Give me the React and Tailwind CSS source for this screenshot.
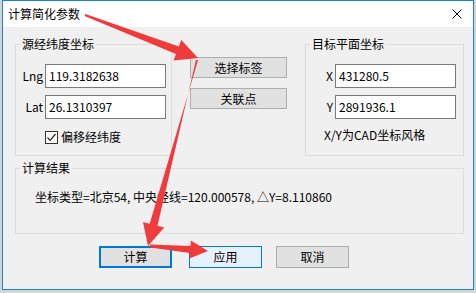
const font = { fontFamily: '"Noto Sans CJK SC", "Noto Sans", sans-serif' };

function Field({ label, value }) {
  return (
    <div className="flex items-center">
      <span className="w-[27px] text-right leading-[16px]">{label}</span>
      <div className="ml-[2px] w-[121px] h-[24px] bg-white border border-[#7a7a7a] pl-[3px] flex items-center leading-[16px]">
        {value}
      </div>
    </div>
  );
}

function Group({ title, className, children }) {
  return (
    <fieldset className={`border border-[#dcdcdc] ${className}`}>
      <legend className="ml-[4px] px-[2px] leading-[16px]">{title}</legend>
      {children}
    </fieldset>
  );
}

function Arrows() {
  return (
    <svg className="absolute left-0 top-0 pointer-events-none" width="476" height="293" viewBox="0 0 476 293">
      <g fill="#ef3b3b">
        <polygon points="85.4,14.1 178.8,46.5 181.3,39.9 198,58 173.5,60.5 176,53.9 84.6,15.9" />
        <polygon points="196,59.7 157.5,225.7 164.2,227.5 148,246 143,221.9 149.7,223.7 198,60.3" />
        <polygon points="150.1,244.5 190.4,246 190.9,240.5 208,251 189.3,258.5 189.8,253 149.9,247.5" />
      </g>
    </svg>
  );
}

export default function App() {
  return (
    <div className="relative w-[476px] h-[293px] bg-[#d4d4d4] text-[12px] text-black" style={font}>
      <div className="ml-[2px] w-[472px] h-[290px] border border-[#1883d7] bg-[#f0f0f0] flex flex-col">
        {/* 标题栏 */}
        <div className="h-[26px] bg-white flex items-center justify-between pl-[5px] pr-[11px]">
          <span className="leading-[16px]">计算简化参数</span>
          <svg width="10" height="10" viewBox="0 0 10 10" stroke="#000" strokeWidth="1">
            <path d="M0.5 0.5L9.5 9.5M9.5 0.5L0.5 9.5" />
          </svg>
        </div>

        <div className="flex-1 pl-[12px]">
          <div className="flex mt-[9px]">
            <Group title="源经纬度坐标" className="w-[157px] h-[120px]">
              <div className="mt-[12px]">
                <Field label="Lng" value="119.3182638" />
              </div>
              <div className="mt-[7px]">
                <Field label="Lat" value="26.1310397" />
              </div>
              <div className="mt-[10px] pl-[29px] flex items-center">
                <div className="w-[13px] h-[13px] border border-[#333] bg-white flex items-center justify-center">
                  <svg width="11" height="11" viewBox="0 0 11 11" fill="none" stroke="#222" strokeWidth="1.2">
                    <path d="M1.5 5.5L4.2 8.3L9.5 2" />
                  </svg>
                </div>
                <span className="ml-[3px] leading-[16px]">偏移经纬度</span>
              </div>
            </Group>

            <div className="ml-[18px] mt-[21px] flex flex-col">
              <button className="w-[97px] h-[21px] bg-[#e1e1e1] border border-[#adadad] leading-[16px]">选择标签</button>
              <button className="mt-[10px] w-[97px] h-[21px] bg-[#e1e1e1] border border-[#adadad] leading-[16px]">关联点</button>
            </div>

            <Group title="目标平面坐标" className="ml-[18px] w-[159px] h-[120px]">
              <div className="mt-[12px]">
                <Field label="X" value="431280.5" />
              </div>
              <div className="mt-[7px]">
                <Field label="Y" value="2891936.1" />
              </div>
              <div className="mt-[8px] pl-[18px] leading-[16px]">X/Y为CAD坐标风格</div>
            </Group>
          </div>

          <Group title="计算结果" className="mt-[4px] w-[449px] h-[74px]">
            <div className="mt-[13px] pl-[19px] leading-[16px]">坐标类型=北京54, 中央经线=120.000578, △Y=8.110860</div>
          </Group>

          <div className="mt-[12px] flex pl-[84px]">
            <button className="w-[73px] h-[22px] bg-[#e1e1e1] border-2 border-[#0078d7] leading-[16px]">计算</button>
            <button className="ml-[17px] w-[73px] h-[22px] bg-[#e5f1fb] border border-[#0078d7] leading-[16px]">应用</button>
            <button className="ml-[14px] w-[73px] h-[22px] bg-[#e1e1e1] border border-[#adadad] leading-[16px]">取消</button>
          </div>
        </div>
      </div>
      <Arrows />
    </div>
  );
}
